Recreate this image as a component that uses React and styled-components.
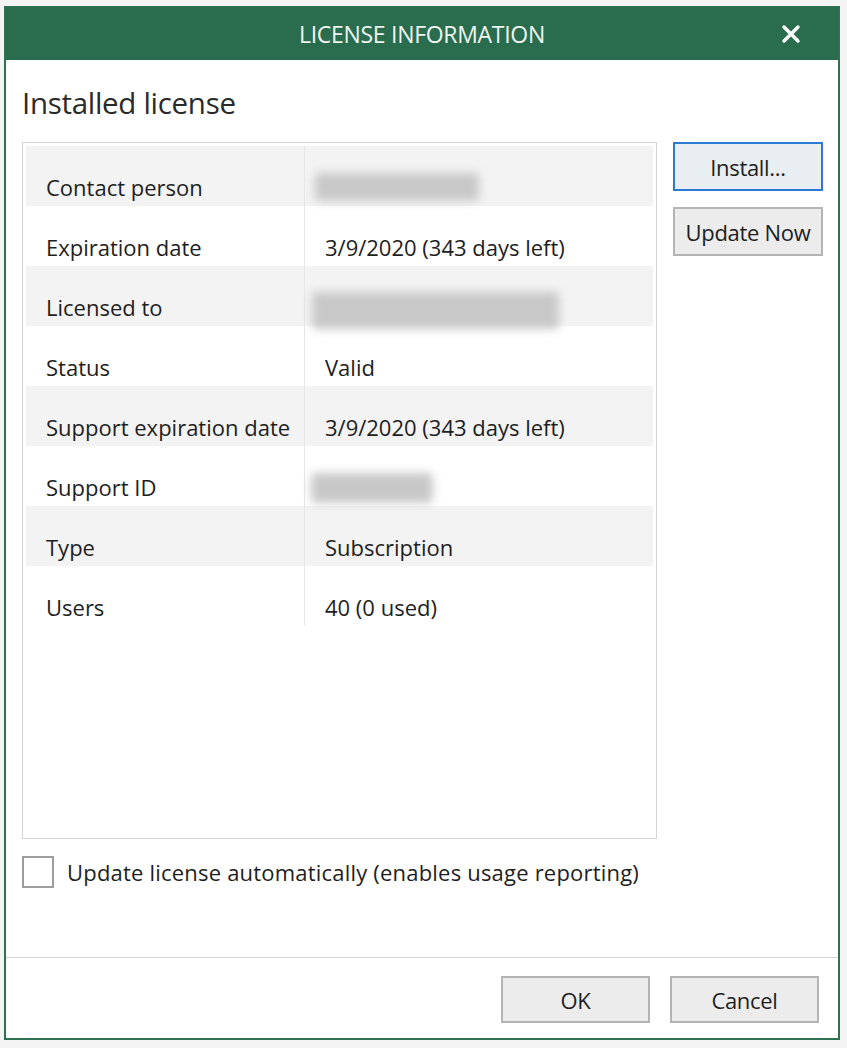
import React from "react";
import styled, { createGlobalStyle } from "styled-components";

const Global = createGlobalStyle`
  html, body {
    margin: 0;
    padding: 0;
    background: #f4f4f4;
  }
  body {
    font-family: "Open Sans", "Noto Sans", sans-serif;
    color: #1e1e1e;
  }
`;

const Page = styled.div`
  padding: 6px 7px 8px 4px;
`;

const Window = styled.div`
  width: 832px;
  height: 1030px;
  border: 2px solid #2d7052;
  background: #fff;
  display: flex;
  flex-direction: column;
`;

const TitleBar = styled.div`
  height: 52px;
  background: #2a6c4e;
  color: #eef5f1;
  display: flex;
  align-items: center;
  justify-content: center;
  position: relative;
  font-size: 23px;
  letter-spacing: -0.3px;
`;

const Close = styled.button`
  position: absolute;
  right: 34px;
  top: 13px;
  width: 26px;
  height: 26px;
  padding: 0;
  border: none;
  background: transparent;
  display: flex;
  align-items: center;
  justify-content: center;
`;

const Body = styled.div`
  flex: 1;
  padding: 26px 15px 0 16px;
  display: flex;
  flex-direction: column;
`;

const Heading = styled.h2`
  margin: 0 0 22px 0;
  font-weight: 400;
  font-size: 29.5px;
  line-height: 34px;
  letter-spacing: -0.3px;
  color: #2a2a2a;
`;

const Main = styled.div`
  display: flex;
  gap: 16px;
`;

const TableBox = styled.div`
  width: 633px;
  height: 689px;
  border: 1px solid #d4d4d4;
  padding: 3px;
  box-sizing: content-box;
`;

const Row = styled.div`
  height: 60px;
  display: grid;
  grid-template-columns: 279px 1fr;
  grid-template-rows: 60px;
  background: ${(p) => (p.$striped ? "#f3f3f3" : "#fff")};
  font-size: 22px;
`;

const Cell = styled.div`
  min-height: 0;
  padding: 22px 0 0 20px;
  display: flex;
  align-items: center;
  border-right: ${(p) => (p.$divider ? "1px solid #e6e6e6" : "none")};
`;

const Blur = styled.div`
  flex: none;
  width: ${(p) => p.$w}px;
  height: ${(p) => p.$h}px;
  margin-left: ${(p) => p.$ml}px;
  margin-top: ${(p) => p.$mt}px;
  background: #c8c8c8;
  filter: blur(5px);
  border-radius: 4px;
`;

const Side = styled.div`
  display: flex;
  flex-direction: column;
  gap: 16px;
`;

const Btn = styled.button`
  width: ${(p) => p.$w || 150}px;
  height: ${(p) => p.$h || 49}px;
  font-family: inherit;
  font-size: 22px;
  letter-spacing: -0.3px;
  color: #1e1e1e;
  background: ${(p) => (p.$focus ? "#e9eef2" : "#ececec")};
  border: ${(p) => (p.$focus ? "2px solid #2b7bd4" : "2px solid #b4b4b4")};
  padding: 0;
  cursor: pointer;
`;

const CheckRow = styled.label`
  margin-top: 17px;
  display: flex;
  align-items: center;
  gap: 13px;
  font-size: 22px;
  letter-spacing: 0.2px;
`;

const Box = styled.span`
  width: 28px;
  height: 28px;
  border: 2px solid #9e9e9e;
  background: #fff;
  display: inline-block;
`;

const Footer = styled.div`
  border-top: 1px solid #d6d6d6;
  padding: 18px 19px 15px 0;
  display: flex;
  justify-content: flex-end;
  gap: 20px;
`;

const rows = [
  ["Contact person", { w: 164, h: 28, ml: -10, mt: 0 }],
  ["Expiration date", "3/9/2020 (343 days left)"],
  ["Licensed to", { w: 247, h: 37, ml: -13, mt: 6 }],
  ["Status", "Valid"],
  ["Support expiration date", "3/9/2020 (343 days left)"],
  ["Support ID", { w: 122, h: 30, ml: -14, mt: 2 }],
  ["Type", "Subscription"],
  ["Users", "40 (0 used)"],
];

export default function App() {
  return (
    <>
      <Global />
      <Page>
        <Window>
          <TitleBar>
            LICENSE INFORMATION
            <Close aria-label="Close">
              <svg width="20" height="20" viewBox="0 0 20 20">
                <path d="M3 3 L17 17 M17 3 L3 17" stroke="#fff" strokeWidth="3.4" strokeLinecap="round" />
              </svg>
            </Close>
          </TitleBar>
          <Body>
            <Heading>Installed license</Heading>
            <Main>
              <TableBox>
                {rows.map(([label, value], i) => (
                  <Row key={label} $striped={i % 2 === 0}>
                    <Cell $divider>{label}</Cell>
                    <Cell>
                      {typeof value === "string" ? (
                        value
                      ) : (
                        <Blur $w={value.w} $h={value.h} $ml={value.ml} $mt={value.mt} />
                      )}
                    </Cell>
                  </Row>
                ))}
              </TableBox>
              <Side>
                <Btn $focus>Install...</Btn>
                <Btn>Update Now</Btn>
              </Side>
            </Main>
            <CheckRow>
              <Box />
              Update license automatically (enables usage reporting)
            </CheckRow>
          </Body>
          <Footer>
            <Btn $w={149} $h={47}>OK</Btn>
            <Btn $w={149} $h={47}>Cancel</Btn>
          </Footer>
        </Window>
      </Page>
    </>
  );
}
